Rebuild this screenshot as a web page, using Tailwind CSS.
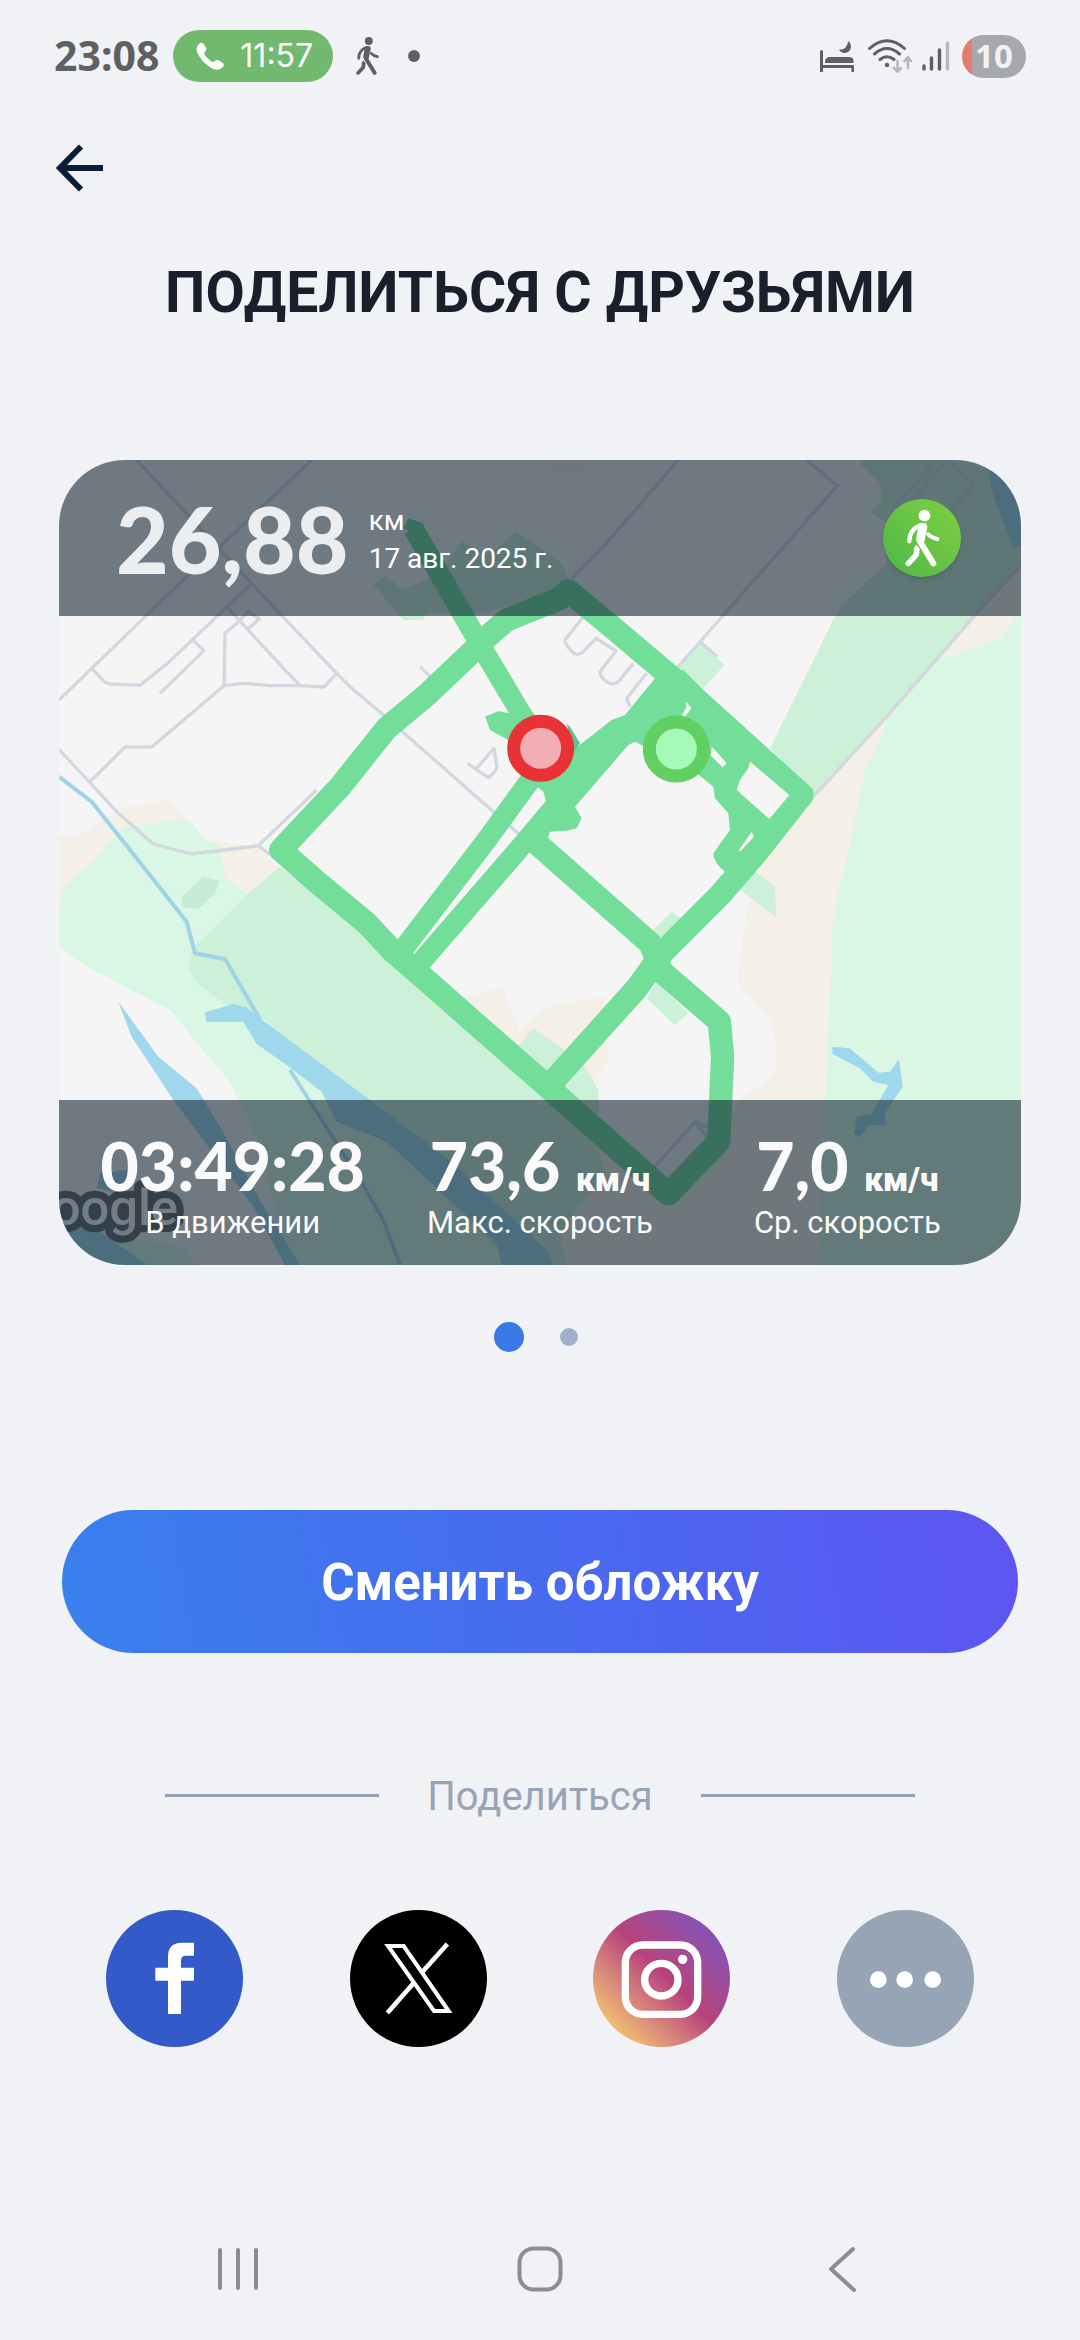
<!DOCTYPE html>
<html lang="ru">
  <head>
    <meta charset="UTF-8" />
    <meta name="viewport" content="width=device-width, initial-scale=1.0" />
    <title>Поделиться с друзьями</title>
    <script src="https://cdn.jsdelivr.net/npm/@tailwindcss/browser@4"></script>
  </head>
  <body class="bg-[#f0f2f6] font-['Roboto',sans-serif]">
    <!-- Shared icons -->
    <svg class="hidden">
      <symbol id="walk" viewBox="1090 205 112 182">
        <circle cx="1152" cy="228" r="18" fill="currentColor" />
        <path d="M1136 252Q1146 249 1157 252L1161 262 1151 310 1126 303 1132 268Z" fill="currentColor" />
        <g fill="none" stroke="currentColor" stroke-linecap="round" stroke-linejoin="round">
          <path d="M1140 258Q1107 268 1106 306" stroke-width="13" />
          <path d="M1163 284Q1172 295 1191 299" stroke-width="12" />
          <path d="M1138 306L1179 373" stroke-width="18" />
          <path d="M1128 330Q1130 346 1122 353L1103 373" stroke-width="17" />
        </g>
        <path d="M1125 318L1136 333" stroke="currentColor" stroke-width="5" />
      </symbol>
    </svg>

    <div class="flex min-h-screen flex-col">
      <!-- Status bar -->
      <div class="flex h-28 items-center justify-between pr-[54px] pl-[54px] text-[#5f6061]">
        <div class="flex items-center">
          <span class="font-['Noto_Sans',sans-serif] text-[41px] font-bold">23:08</span>
          <div class="ml-3.5 flex h-[52px] w-40 items-center gap-4 rounded-full bg-[#72b970] pl-[23px] text-white">
            <svg class="h-[29px] w-7 shrink-0" viewBox="0 0 28 28" fill="currentColor">
              <path d="M3 1.500Q5.500-1 7.500 1.500L10 5Q11 7 9.500 8.500L8.500 10Q8 11.500 10 14L14 18Q16 20 18 19L20 17.800Q21.500 17 23 18L27 20.500Q29 22.500 26.500 25Q21 30 13 24Q7 20 3 13.500Q-2 6 3 1.500Z" />
            </svg>
            <span class="font-['Inter',sans-serif] text-[32px]">11:57</span>
          </div>
          <svg class="ml-[22px] h-10 w-[25px]"><use href="#walk" /></svg>
          <span class="ml-7 size-3 rounded-full bg-[#5f6061]"></span>
        </div>
        <div class="flex items-center">
          <!-- Sleep mode -->
          <svg class="h-8 w-[34px]" viewBox="0 0 34 32" fill="currentColor">
            <path d="M0 11.500a1.500 1.500 0 0 1 3 0V25H33a1 1 0 0 1 1 1v5a1.300 1.300 0 0 1-2.600 0V28H3v3a1.500 1.500 0 0 1-3 0Z" />
            <path d="M5 23v-1.500Q5.500 17 10 17H29Q33.500 17 33.500 21v2Z" />
            <path d="M28 1A8 8 0 0 1 19 9.500 6.400 6.400 0 0 0 31 7Q31 3 28 1Z" />
          </svg>
          <!-- Wi-Fi -->
          <svg class="ml-3.5 h-[34px] w-11" viewBox="0 0 44 34" fill="none" stroke="currentColor" stroke-width="3" stroke-linecap="round">
            <path d="M1.500 9.500Q19-6 36.500 9.500M6.500 15Q19 4 31.500 15M12 20.500Q19 15 26 20.500" />
            <circle cx="19" cy="26" r="2.200" fill="currentColor" stroke="none" />
            <path d="M29.500 22V32M26 29L29.500 32.500 33 29M40 29V19M36.500 22L40 18.500 43 22" stroke="#b7b8bb" stroke-width="2.600" />
          </svg>
          <!-- Signal -->
          <svg class="ml-2.5 h-[30px] w-7" viewBox="0 0 28 30" fill="none" stroke="currentColor" stroke-width="3.400" stroke-linecap="round">
            <path d="M2 25V28M9.500 17V28M17.500 9V28" />
            <path d="M25.500 2V28" stroke="#b7b8bb" />
          </svg>
          <div class="ml-3 flex h-[43px] w-16 items-center justify-center rounded-full bg-linear-to-r from-[#e57c70] from-[10px] to-[#a7a8ab] to-[10px] font-['Noto_Sans',sans-serif] text-[33px] font-bold text-[#f0f2f6]">10</div>
        </div>
      </div>

      <!-- Page header -->
      <header>
        <button type="button" aria-label="Назад" class="ml-12 flex h-28 w-16 items-center justify-center">
          <svg class="size-12" viewBox="0 0 48 48" fill="none" stroke="#0a1d38" stroke-width="6">
            <path d="M47 24H6M25 2.500L4 24 25 45.500" />
          </svg>
        </button>
        <h1 class="mt-[34px] text-center text-[57px] leading-[70px] font-bold text-[#1b1e2b]">ПОДЕЛИТЬСЯ С ДРУЗЬЯМИ</h1>
      </header>

      <main>
        <!-- Activity cover -->
        <section class="relative mx-[59px] mt-[132px] overflow-hidden rounded-[66px]">
          <svg class="block w-full" viewBox="57 60 2886 2415" role="img" aria-label="Карта маршрута">
            <rect x="57" y="60" width="2886" height="2415" fill="#f5f5f5" />
            <!-- Sand -->
            <g fill="#f4efe7">
              <path d="M57 1190H110L250 1105 390 1078 435 1138 500 1200 650 1220 720 1290 620 1375H57Z" />
              <path d="M1270 1670L1385 1640 1440 1775 1500 1715 1540 1695 1693 1670V1740L1708 1850 1665 1920 1500 1850 1430 1830Z" />
              <path d="M2943 375L2330 1065 2170 1260 2135 1360 2105 1500 2095 1625 2190 1740 2208 1800V1890L2180 1920 2100 1980 1880 2230 1740 2190 1660 1990 1600 2330 1560 2380 1580 2475H2943Z" />
              <path d="M1470 60H1670L1610 110 1540 95Z" />
            </g>
            <path d="M1700 2000L2100 1980 1885 2240Z" fill="#f5f5f5" />
            <!-- Meadows -->
            <g fill="#d9f7e4">
              <path d="M57 1385L75 1340 165 1255 255 1160 445 1138 495 1198 540 1215 555 1310 625 1365 760 1400 1500 2000 1580 2475H740L660 2110 600 1985 565 1920 480 1820 390 1710 150 1585 57 1520Z" />
              <path d="M2943 515L2880 600 2700 660 2600 770 2535 850 2520 900 2475 990 2420 1260 2380 1420 2365 1800 2350 2100 2335 2475H2943Z" />
              <path d="M180 2375L430 2425 470 2475H300Z" />
            </g>
            <!-- Parks -->
            <g fill="#ccf0d8">
              <path d="M720 1280L620 1365 460 1525 445 1585 475 1635 560 1695 680 1740 1040 2100 1420 2475H1580L1560 2380 1610 2310 1700 2200 1650 2080 1100 1560Z" />
              <path d="M425 1370L490 1310 540 1323 525 1360 475 1407 427 1400Z" fill="#c6ead2" />
              <path d="M2463 60V75L2520 130 2525 180 2490 215 2535 245 2540 370 2405 495 2380 540 2190 925 2320 1065 2810 525 2943 375V60Z" />
              <path d="M1000 435L1035 405 1090 450 1200 400 1265 300 1290 320 1350 340 1430 275 1560 365 1600 440 1330 520H1160L1150 540H1090Z" />
              <path d="M1980 610L2053 675 1990 745 1900 690Z" />
              <path d="M1480 1765L1560 1820 1640 1885 1675 1950 1677 2010 1600 2080 1430 1825Z" />
              <path d="M1895 1415L1930 1440 1880 1510 1830 1480ZM1850 1625L1945 1720 1905 1755 1820 1675ZM2140 1290L2205 1340 2208 1432 2090 1340Z" />
            </g>
            <!-- Water -->
            <g fill="#9fd8ec">
              <path d="M235 1685L355 1850 470 1945 540 2060 660 2280 780 2475H735L640 2300 400 1980 275 1790Z" />
              <path d="M495 1717L580 1692 620 1702 670 1742 990 1980 1240 2170 1520 2430 1540 2475H1385L1370 2410 1040 2105 890 2045 845 1955 740 1875 650 1812 610 1745H498Z" />
              <path d="M180 2200L270 2188 250 2260 170 2245ZM57 2330L180 2375 320 2475H57Z" />
              <path d="M2845 95L2943 60V320H2920L2880 220 2855 150Z" />
              <path d="M2377 1820L2430 1825 2515 1898 2550 1895 2577 1858 2588 1940 2535 2020V2055H2485L2463 2090 2442 2082 2450 2030 2495 2022 2545 1935 2500 1925 2460 1885 2377 1842Z" />
              <path d="M57 1010L155 1085 290 1255 440 1445 465 1540 555 1557 660 1738" fill="none" stroke="#9fd4e8" stroke-width="12" />
              <path d="M750 1890L960 2220 1030 2340 1080 2475" fill="none" stroke="#9fd4e8" stroke-width="11" />
            </g>
            <!-- Streets -->
            <g fill="none" stroke="#d3d7e0" stroke-width="10" stroke-linejoin="round">
              <path d="M57 780L155 685 440 410 540 320 815 60" />
              <path d="M290 60L620 415 890 700 930 740 1030 825 1440 1185" />
              <path d="M155 685L190 722Q200 732 215 732L300 736 385 668 630 435" />
              <path d="M455 597L492 632 360 760M560 500L735 690 780 735M595 545L625 515 658 537 620 570" />
              <path d="M595 545L555 580 552 737M890 700L852 741 780 737H690L615 730 552 737 335 921H255L150 1025" />
              <path d="M57 928L235 1120 340 1212 455 1242 655 1217 830 1050M655 1217L690 1245" />
              <path d="M1140 680L1170 710M1283 970L1345 1013Q1375 990 1370 975L1362 925 1305 990" />
              <path d="M1915 60L1690 320 1595 415M2300 60L2392 137 1985 600 1910 685M1980 605L2032 650" />
              <path d="M2943 375L2810 520 2540 830 2320 1070 2030 1410" />
              <path d="M2690 60L2560 200M2725 60L2800 135 2720 220M2725 60L2590 210" />
              <path d="M1530 525L1580 490M1630 530L1575 600Q1575 612 1590 628 1610 655 1630 635L1668 595 1728 633 1680 695Q1680 710 1700 725 1720 740 1738 722L1780 670M1820 700L1760 775 1770 800" />
              <path d="M1845 2180L1965 2045 2010 2065M1965 2045L2000 2090" />
            </g>
            <!-- Recorded track -->
            <g fill="none" stroke="#72de9a" stroke-width="70" stroke-linejoin="round">
              <path d="M1318 610L1400 540 1560 475 1585 452 1715 560 1910 725 2165 955 2286 1065 2140 1250 2040 1365 1870 1535 1790 1645 1525 1940" />
              <path d="M1318 615L1160 765 1040 865 900 1040 722 1230 830 1325 980 1450 1060 1535 1170 1630 1300 1745 1500 1920 1885 2262 2036 2105 2048 1850 2038 1745 1865 1595 1830 1510 1490 1210" />
            </g>
            <g fill="none" stroke="#72de9a" stroke-width="62" stroke-linejoin="round">
              <path d="M1120 265L1318 610 1440 815 1490 890" />
              <path d="M1080 1540L1340 1200 1500 980" />
              <path d="M1140 1570L1460 1200 1560 1080" />
            </g>
            <g fill="#72de9a">
              <path d="M1090 265L1105 235 1150 250 1150 290ZM1335 830L1375 813 1430 825 1440 920 1350 870Z" />
              <path d="M1845 715L1930 690 2000 760 2320 1050 2160 1260 2060 1300Q2020 1270 2020 1240L2070 1170 2065 1120 2025 1075 2020 1040 1970 1000 1785 905 1765 915 1605 1100 1625 1135 1610 1165 1580 1172 1530 1175 1500 1260 1440 1200 1520 1090 1510 1055 1480 1030 1600 930 1715 840 1755 825Z" />
              <path d="M1580 850L1593 865 1620 910 1600 940Z" fill="#5cc98a" />
            </g>
            <g fill="#f5f5f5">
              <path d="M1938 785L1955 805 1935 830 1925 825 1938 805ZM2015 920L2030 935 2060 970 2048 982 2013 948Z" />
              <path d="M2130 965L2248 1065 2188 1137 2090 1050 2100 1020 2125 985ZM2135 1175L2142 1190 2100 1235 2097 1230Z" />
            </g>
            <circle cx="1502" cy="925" r="81" fill="#f3aeb5" stroke="#e83234" stroke-width="39" />
            <circle cx="1909" cy="927" r="81" fill="#a5fab7" stroke="#60d062" stroke-width="39" />
            <text x="414" y="2354" text-anchor="end" class="font-['Roboto',sans-serif] text-[152px] font-medium" fill="#fff" stroke="#626466" stroke-width="44" stroke-linejoin="round" paint-order="stroke">Google</text>
          </svg>

          <div class="absolute inset-x-0 top-0 flex h-[156px] items-center bg-[#142636]/60 pr-[60px] pl-[57px] text-white">
            <span class="font-['Lato',sans-serif] text-[91px] leading-none font-black text-[#ecedef]">26,88</span>
            <div class="ml-5 pt-1 text-[28px] leading-[38px]">
              <p>км</p>
              <p>17 авг. 2025 г.</p>
            </div>
            <div class="ml-auto flex size-[78px] items-center justify-center rounded-full bg-linear-to-tr from-[#4cb748] to-[#80d03f] shadow-md">
              <svg class="h-[60px] w-[37px]"><use href="#walk" /></svg>
            </div>
          </div>

          <div class="absolute inset-x-0 bottom-0 grid h-[165px] grid-cols-3 bg-[#142636]/60 px-5 pt-7 text-center text-[#fafafa]">
            <div>
              <p class="font-['Lato',sans-serif] text-[66px] leading-[76px] font-black">03:49:28</p>
              <p class="text-[31px] leading-[38px]">В движении</p>
            </div>
            <div>
              <p class="font-['Lato',sans-serif] text-[66px] leading-[76px] font-black">73,6 <span class="font-['Roboto',sans-serif] text-[33px] leading-none">км/ч</span></p>
              <p class="text-[31px] leading-[38px]">Макс. скорость</p>
            </div>
            <div>
              <p class="font-['Lato',sans-serif] text-[66px] leading-[76px] font-black">7,0 <span class="font-['Roboto',sans-serif] text-[33px] leading-none">км/ч</span></p>
              <p class="text-[31px] leading-[38px]">Ср. скорость</p>
            </div>
          </div>
        </section>

        <!-- Cover pager -->
        <div class="mt-[57px] flex items-center justify-center gap-9 pr-2">
          <button type="button" aria-label="Обложка 1" class="size-[30px] rounded-full bg-[#3a77e7]"></button>
          <button type="button" aria-label="Обложка 2" class="size-[18px] rounded-full bg-[#a3aecb]"></button>
        </div>

        <div class="mt-[158px] px-[62px]">
          <button type="button" class="h-[143px] w-full rounded-full bg-linear-[80deg] from-[#3a80ee] via-[#476bef] via-50% to-[#5e55f2] pt-1 text-[51px] font-bold text-white">Сменить обложку</button>
        </div>

        <!-- Share -->
        <div class="mt-[115px] flex items-center gap-12 px-[165px] text-[#98a4b5]">
          <span class="h-[3px] flex-1 bg-[#98a4b5]"></span>
          <h2 class="pt-1 text-[40px] leading-[50px]">Поделиться</h2>
          <span class="h-[3px] flex-1 bg-[#98a4b5]"></span>
        </div>
        <div class="mt-[88px] flex justify-between px-[106px]">
          <button type="button" aria-label="Facebook" class="size-[137px] rounded-full bg-[#335ac8]">
            <svg viewBox="78 60 411 411" fill="#fff">
              <path d="M264 372V272H226V233H264V200Q264 158 305 158H342V197H318Q303 197 303 212V233H342V272H303V372Z" />
            </svg>
          </button>
          <button type="button" aria-label="X" class="size-[137px] rounded-full bg-black">
            <svg viewBox="810 60 411 411" fill="none" stroke="#fff">
              <path d="M924 168L971 168 1106 363 1062 363Z" stroke-width="12" />
              <path d="M1102 162L1027 246M922 369L1001 279" stroke-width="14" />
            </svg>
          </button>
          <button type="button" aria-label="Instagram" class="size-[137px] rounded-full bg-linear-to-tr from-[#f7cb6b] from-10% via-[#b8417c] via-52% to-[#7e52bc] to-90%">
            <svg viewBox="99 60 411 411" fill="none" stroke="#fff" stroke-width="22">
              <rect x="196" y="165" width="217" height="208" rx="52" />
              <ellipse cx="304" cy="269" rx="50" ry="49" />
              <circle cx="368" cy="208" r="14" fill="#fff" stroke="none" />
            </svg>
          </button>
          <button type="button" aria-label="Ещё" class="size-[137px] rounded-full bg-[#97a4b5]">
            <svg viewBox="831 60 411 411" fill="#fff">
              <circle cx="955" cy="269" r="25" />
              <circle cx="1034" cy="269" r="25" />
              <circle cx="1118" cy="269" r="25" />
            </svg>
          </button>
        </div>
      </main>

      <!-- System navigation -->
      <nav class="mt-auto flex h-[142px] items-center justify-between px-[206px]">
        <button type="button" aria-label="Недавние" class="flex size-16 items-center justify-center">
          <svg class="h-11 w-10" viewBox="0 0 40 44" fill="none" stroke="#8b8d91" stroke-width="4" stroke-linecap="round">
            <path d="M2 3V41M20 3V41M38 3V41" />
          </svg>
        </button>
        <button type="button" aria-label="Домой" class="flex size-16 items-center justify-center">
          <svg class="size-[46px]" viewBox="0 0 46 46" fill="none" stroke="#8b8d91" stroke-width="4">
            <rect x="2.500" y="2.500" width="41" height="41" rx="14" />
          </svg>
        </button>
        <button type="button" aria-label="Назад" class="flex size-16 items-center justify-center">
          <svg class="h-[46px] w-7" viewBox="0 0 28 46" fill="none" stroke="#8b8d91" stroke-width="4" stroke-linecap="round" stroke-linejoin="round">
            <path d="M25 3L3 23 26 44" />
          </svg>
        </button>
      </nav>
    </div>
  </body>
</html>
